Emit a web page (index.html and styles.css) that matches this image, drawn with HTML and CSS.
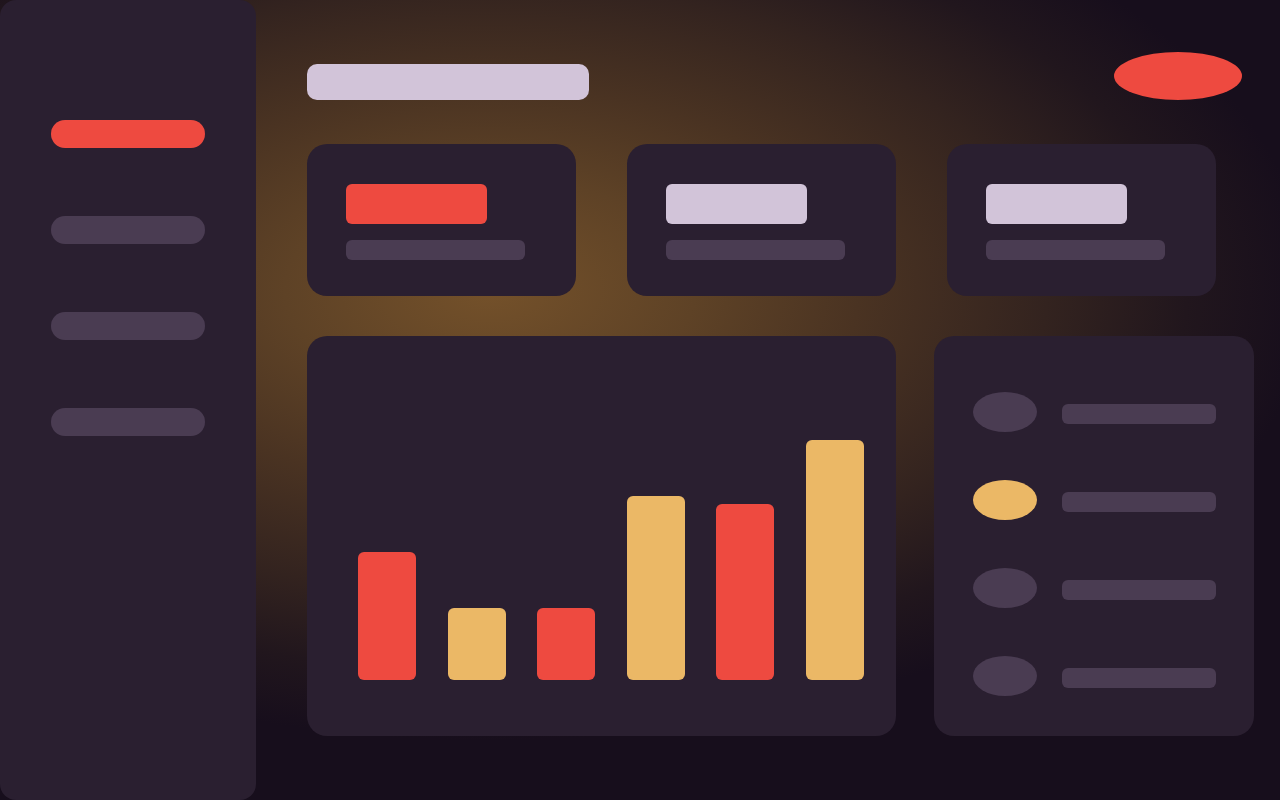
FILE: index.html
```html
<!DOCTYPE html>
<html>
<head>
<meta charset="utf-8">
<title>Dashboard</title>
<link rel="stylesheet" href="styles.css">
</head>
<body>
<aside class="sidebar">
  <div class="nav-item active"></div>
  <div class="nav-item"></div>
  <div class="nav-item"></div>
  <div class="nav-item"></div>
</aside>
<main class="main">
  <header class="header">
    <div class="title"></div>
    <div class="avatar"></div>
  </header>
  <section class="stats">
    <div class="card"><div class="stat-value red"></div><div class="stat-label"></div></div>
    <div class="card"><div class="stat-value"></div><div class="stat-label"></div></div>
    <div class="card"><div class="stat-value"></div><div class="stat-label"></div></div>
  </section>
  <section class="lower">
    <div class="chart">
      <div class="bar red" style="height:128px"></div>
      <div class="bar yellow" style="height:72px"></div>
      <div class="bar red" style="height:72px"></div>
      <div class="bar yellow" style="height:184px"></div>
      <div class="bar red" style="height:176px"></div>
      <div class="bar yellow" style="height:240px"></div>
    </div>
    <div class="list">
      <div class="row"><div class="dot"></div><div class="line"></div></div>
      <div class="row"><div class="dot yellow"></div><div class="line"></div></div>
      <div class="row"><div class="dot"></div><div class="line"></div></div>
      <div class="row"><div class="dot"></div><div class="line"></div></div>
    </div>
  </section>
</main>
</body>
</html>
```

FILE: styles.css
```css
html, body {
  margin: 0;
  padding: 0;
  width: 1280px;
  height: 800px;
  overflow: hidden;
}
body {
  display: flex;
  font-family: "Liberation Sans", sans-serif;
  background-color: #170e1c;
  background-image:
    radial-gradient(ellipse 820px 450px at 490px 290px, #74512a 0%, #5e4226 25%, #4a3322 45%, #33231f 68%, #21161d 85%, #170e1c 100%);
}
.sidebar {
  width: 256px;
  height: 800px;
  flex: none;
  box-sizing: border-box;
  background: #2a1f30;
  border-radius: 16px;
  padding: 120px 0 0 51px;
  display: flex;
  flex-direction: column;
  gap: 68px;
}
.nav-item {
  width: 154px;
  height: 28px;
  border-radius: 14px;
  background: #4a3c52;
}
.nav-item.active { background: #ee4a40; }
.main {
  flex: 1;
  padding: 52px 0 0 51px;
  box-sizing: border-box;
}
.header {
  display: flex;
  justify-content: space-between;
  align-items: flex-end;
  width: 935px;
  height: 48px;
}
.title {
  width: 282px;
  height: 36px;
  border-radius: 10px;
  background: #d2c4d9;
}
.avatar {
  width: 128px;
  height: 48px;
  border-radius: 50%;
  background: #ee4a40;
}
.stats {
  display: grid;
  grid-template-columns: repeat(3, 269px);
  gap: 51px;
  margin-top: 44px;
}
.card {
  height: 152px;
  box-sizing: border-box;
  background: #2a1f30;
  border-radius: 20px;
  padding: 40px 0 0 39px;
}
.stat-value {
  width: 141px;
  height: 40px;
  border-radius: 6px;
  background: #d2c4d9;
}
.stat-value.red { background: #ee4a40; }
.stat-label {
  width: 179px;
  height: 20px;
  border-radius: 6px;
  background: #4a3c52;
  margin-top: 16px;
}
.lower {
  display: grid;
  grid-template-columns: 589px 320px;
  gap: 38px;
  margin-top: 40px;
}
.chart {
  height: 400px;
  box-sizing: border-box;
  background: #2a1f30;
  border-radius: 20px;
  padding: 0 32px 56px 51px;
  display: flex;
  align-items: flex-end;
  gap: 31.6px;
}
.bar {
  width: 58px;
  border-radius: 6px;
}
.bar.red { background: #ee4a40; }
.bar.yellow { background: #ebb866; }
.list {
  height: 400px;
  box-sizing: border-box;
  background: #2a1f30;
  border-radius: 20px;
  padding: 56px 0 0 39px;
  display: flex;
  flex-direction: column;
  gap: 48px;
}
.row {
  display: flex;
  align-items: center;
  gap: 25px;
}
.dot {
  width: 64px;
  height: 40px;
  border-radius: 50%;
  background: #4a3c52;
}
.dot.yellow { background: #ebb866; }
.line {
  width: 154px;
  height: 20px;
  border-radius: 6px;
  background: #4a3c52;
  margin-top: 4px;
}
```
